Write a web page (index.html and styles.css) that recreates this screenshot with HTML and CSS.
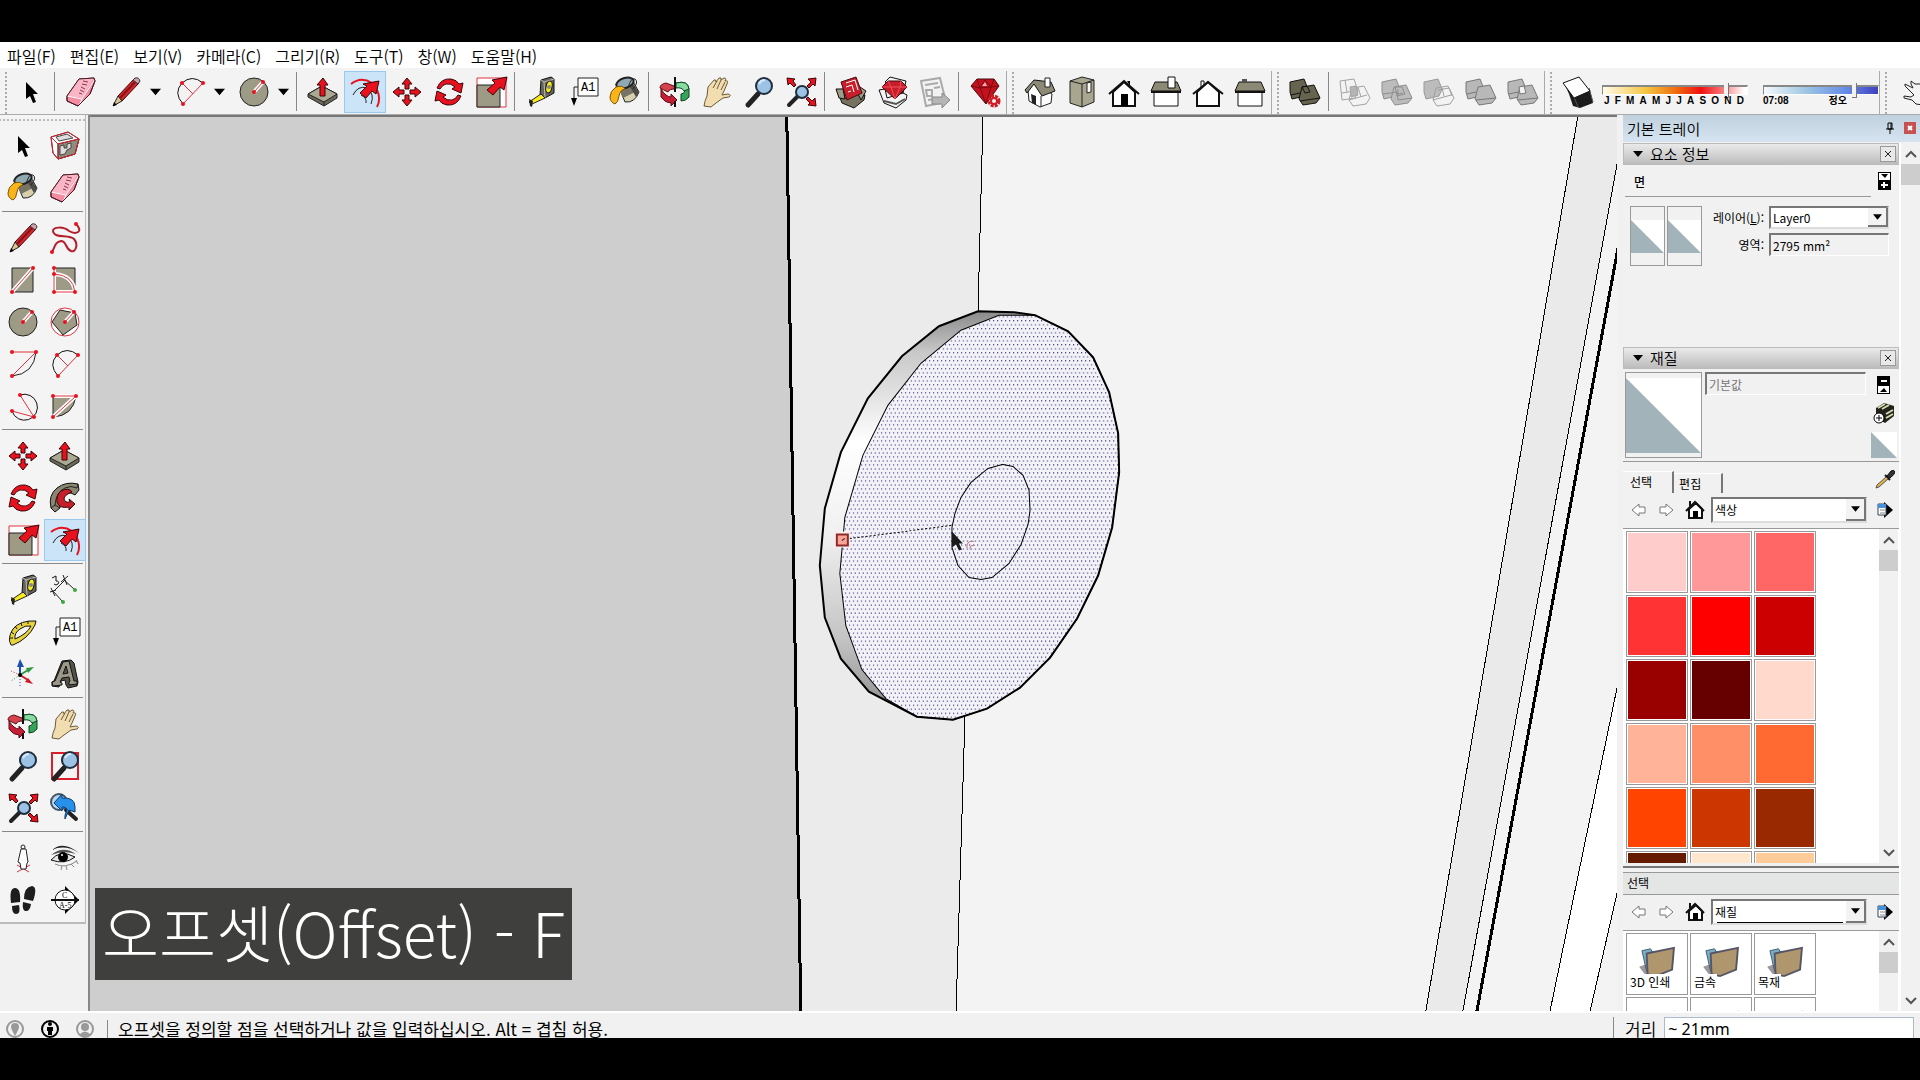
FILE: index.html
```html
<!DOCTYPE html>
<html lang="ko">
<head>
  <meta charset="UTF-8" />
  <meta name="viewport" content="width=device-width, initial-scale=1.0"/>
  <title>SketchUp</title>
  <link rel="stylesheet" href="styles.css">
</head>
<body>

<!-- icon set -->
<svg class="icon-set" aria-hidden="true">
  <symbol id="i-arrow" viewBox="0 0 36 36"><path d="M13 8v17l4-3 3 7 3-1-3-8h5z"/></symbol>
  <symbol id="i-component" viewBox="0 0 36 36">
    <path d="M4 9l17-5 11 7-4 15-17 5-5-6z" fill="#fff" stroke="#222"/>
    <path d="M11 16l21-5-4 15-17 5z" fill="#8f8c7c" stroke="#222"/>
    <path d="M13 18l4-1v3l3 0v-4l4-1v5l-4 2-2 4-5 1zM9 9l11-3 6 4-14 3z" fill="#ddd" stroke="#444"/>
    <path d="M4 9l17-5 11 7-4 15-17 5-5-6zM4 9l7 7 21-5M11 16v15" fill="none" stroke="#e02030"/>
  </symbol>
  <symbol id="i-bucket" viewBox="0 0 36 36">
    <path d="M11 11l7 17q10 1 14-10L25 6z" fill="#d6d0ac" stroke="#222"/>
    <path d="M12 15l10-4 5 3 1 4-12 6z" fill="#777465"/><path d="M24 7l8 11-3 5-7-12z" fill="#4c4b45"/>
    <ellipse cx="18" cy="9" rx="9" ry="5" transform="rotate(-18 18 9)" fill="#8fa9b3" stroke="#222" stroke-width="2"/>
    <path d="M21 14Q24 3 28 5q4 3-2 10" fill="none" stroke="#222"/>
    <path d="M9 13q7-2 9 2-5 1-6 7-1 7-4 8-5-2-5-7 0-6 6-10z" fill="#f9b418" stroke="#7a5410"/>
  </symbol>
  <symbol id="i-eraser" viewBox="0 0 36 36">
    <path d="M16 5l15-1 1 3-5 13-12 12-11-5v-5z" fill="#f48ba2" stroke="#4a1b25"/>
    <path d="M16 5l15-1-12 20-15-2z" fill="#fbb6c6"/>
    <path d="M4 22l15 3 13-20M19 25l-3 7" fill="none" stroke="#fff"/>
    <path d="M16 5L4 22v5l11 5 12-12 5-13-1-3z" fill="none" stroke="#4a1b25"/>
    <path d="M16 19l3 1m-2-4l4 2m-3-5l4 2m-3-5l5 1m-4-4l5 1" stroke="#8a3550"/>
  </symbol>
  <symbol id="i-pencil" viewBox="0 0 36 36">
    <path d="M10 22L26 5l5 4-17 18z" fill="#d8232c" stroke="#3b0d0d"/>
    <path d="M12 24L28 7" stroke="#861414" stroke-width="2"/>
    <path d="M10 22l4 5-9 5z" fill="#ddc393" stroke="#222"/><path d="M5 32l1-4 3 3z"/>
    <path d="M25 6l2-2q4-1 5 3l-2 3z" fill="#cfa3a8" stroke="#333"/>
  </symbol>
  <symbol id="i-freehand" viewBox="0 0 36 36">
    <path d="M29 4C37 12 29 15 22 11 16 6 6 7 6 11c1 8 16 3 21 8 5 6 1 14-3 12-6-2-4-10-10-10-6 1-6 6-9 11" fill="none" stroke="#b3202c" stroke-width="2"/>
    <g fill="#e8121f"><circle cx="29" cy="4" r="2"/><circle cx="5" cy="32" r="2"/></g>
  </symbol>
  <symbol id="i-line" viewBox="0 0 36 36">
    <path d="M7 6h21v24H7z" fill="#9d9a86" stroke="#222"/>
    <path d="M7 30L28 6" stroke="#fff" stroke-width="4"/><path d="M7 30L28 6" stroke="#e0323c"/>
    <g fill="#e8121f"><circle cx="7" cy="30" r="2"/><circle cx="28" cy="6" r="2"/></g>
  </symbol>
  <symbol id="i-rect" viewBox="0 0 36 36">
    <path d="M7 6h21v24H7z" fill="#9d9a86" stroke="#222"/>
    <path d="M7 6v24h21M7 12q19 1 21 18" fill="none" stroke="#fff" stroke-width="4"/>
    <path d="M7 6v24h21M7 12q19 1 21 18" fill="none" stroke="#e0323c"/>
    <g fill="#e8121f"><circle cx="7" cy="6" r="2"/><circle cx="7" cy="12" r="2"/><circle cx="7" cy="30" r="2"/><circle cx="28" cy="30" r="2"/></g>
  </symbol>
  <symbol id="i-circle" viewBox="0 0 36 36">
    <circle cx="18" cy="18" r="14" fill="#9d9a86" stroke="#222"/>
    <path d="M18 18l9-10" stroke="#fff" stroke-width="4"/><path d="M18 18l9-10" stroke="#e0323c"/>
    <g fill="#e8121f"><circle cx="18" cy="18" r="2"/><circle cx="27" cy="8" r="2"/></g>
  </symbol>
  <symbol id="i-polygon" viewBox="0 0 36 36">
    <circle cx="18" cy="18" r="14" fill="#fff" stroke="#e0323c"/>
    <path d="M13 6l15 3 2 12-14 10L5 18z" fill="#9d9a86" stroke="#222"/>
    <path d="M18 18l9-10" stroke="#fff" stroke-width="4"/><path d="M18 18l9-10" stroke="#e0323c"/>
    <g fill="#e8121f"><circle cx="18" cy="18" r="2"/><circle cx="27" cy="8" r="2"/></g>
  </symbol>
  <symbol id="i-arc" viewBox="0 0 36 36">
    <path d="M31 6q-2 22-24 24" fill="none" stroke="#222"/>
    <path d="M7 6h24L7 30" fill="none" stroke="#e0323c"/>
    <g fill="#e8121f"><circle cx="7" cy="6" r="2"/><circle cx="31" cy="6" r="2"/><circle cx="7" cy="30" r="2"/></g>
  </symbol>
  <symbol id="i-arc2" viewBox="0 0 36 36">
    <path d="M11 30Q1 19 10 9 20 0 31 9" fill="none" stroke="#111"/>
    <path d="M31 9L11 30M10 9l11 11" fill="none" stroke="#e0323c"/>
    <g fill="#e8121f"><circle cx="10" cy="9" r="2"/><circle cx="31" cy="9" r="2"/><circle cx="11" cy="30" r="2"/></g>
  </symbol>
  <symbol id="i-arc3" viewBox="0 0 36 36">
    <path d="M15 7a13 13 0 1 1-8 16" fill="none" stroke="#111"/>
    <path d="M15 7l14 22L7 23" fill="none" stroke="#e0323c"/>
    <g fill="#e8121f"><circle cx="15" cy="7" r="2"/><circle cx="7" cy="23" r="2"/><circle cx="29" cy="29" r="2"/></g>
  </symbol>
  <symbol id="i-pie" viewBox="0 0 36 36">
    <path d="M6 8v21Q26 28 29 8z" fill="#9d9a86" stroke="#222"/>
    <path d="M6 8h23L6 29" fill="none" stroke="#fff" stroke-width="4"/><path d="M6 8h23L6 29" fill="none" stroke="#e0323c"/>
    <g fill="#e8121f"><circle cx="6" cy="8" r="2"/><circle cx="29" cy="8" r="2"/><circle cx="6" cy="29" r="2"/></g>
  </symbol>
  <symbol id="i-move" viewBox="0 0 36 36">
    <g id="m-arm"><path d="M18 4l5 6h-3v5h-4v-5h-3z" fill="#e8121f" stroke="#3a0508"/></g>
    <use href="#m-arm" transform="rotate(90 18 18)"/><use href="#m-arm" transform="rotate(180 18 18)"/><use href="#m-arm" transform="rotate(270 18 18)"/>
  </symbol>
  <symbol id="i-push" viewBox="0 0 36 36">
    <path d="M3 20l14-8 15 8v4L19 32 3 23z" fill="#6b6958" stroke="#222"/>
    <path d="M3 20l14-8 15 8-13 8z" fill="#aba994" stroke="#222"/><path d="M19 28v4" stroke="#222"/>
    <path d="M18 4l5 7h-3v11h-5V11h-3z" fill="#e8121f" stroke="#3a0508"/>
  </symbol>
  <symbol id="i-rotate" viewBox="0 0 36 36">
    <path id="r-half" d="M6 14q4-10 14-9 6 1 8 5l4-1-2 10-9-4 3-2q-4-4-9-3-4 1-6 5z" fill="#e8121f" stroke="#3a0508"/>
    <use href="#r-half" transform="rotate(180 18 18)"/>
  </symbol>
  <symbol id="i-follow" viewBox="0 0 36 36">
    <path d="M4 28Q1 15 10 8q9-7 21-4l1 6-4 5-4-2q-8 0-11 6-1 4 0 9l-5 4z" fill="#8a8672" stroke="#111"/>
    <path d="M4 28l4-3q1-13 10-17 6-3 12 0l1-4M8 25l5 3" fill="none" stroke="#222"/>
    <path d="M14 11q8-4 11 1-8 3-8 7 1 4 6 3l-1-3 6 5-6 6 0-3q-10 2-12-5-1-7 4-11z" fill="#c51f2a" stroke="#3a0508"/>
  </symbol>
  <symbol id="i-scale" viewBox="0 0 36 36">
    <path d="M4 4h29v29H4z" fill="#fff" stroke="#e0323c"/><path d="M4 11h23v22H4z" fill="#9d9a86" stroke="#222"/>
    <path d="M34 3l-3 13-4-3-7 8-6-5 8-7-3-3z" fill="#e8121f" stroke="#3a0508"/>
  </symbol>
  <symbol id="i-offset" viewBox="0 0 36 36">
    <path d="M4 10Q14 2 25 9q11 12 5 24" fill="none" stroke="#e8121f" stroke-width="2"/>
    <path d="M6 21q5-10 14-7 8 6 4 16M14 21q6 3 5 8" fill="none" stroke="#222"/>
    <path d="M32 7l-3 13-4-3-6 7-6-5 7-7-4-2z" fill="#e8121f" stroke="#3a0508"/>
  </symbol>
  <symbol id="i-tape" viewBox="0 0 36 36">
    <path d="M18 6l10-3 3 2v14l-9 5-5-3z" fill="#66645c" stroke="#111"/><path d="M18 6l3 2 10-3M21 8l1 16" fill="none" stroke="#bbb"/>
    <ellipse cx="26" cy="13" rx="3" ry="6" transform="rotate(12 26 13)" fill="#f6ea20" stroke="#111"/><circle cx="26" cy="13" r="2" fill="#888"/>
    <path d="M18 20l4 4-13 6-3-2z" fill="#f6ea20" stroke="#222"/><path d="M6 25l4 2-1 6-2-1z" fill="#222"/>
  </symbol>
  <symbol id="i-dim" viewBox="0 0 36 36">
    <path d="M18 8L6 20m10-13l11 10M6 19l9 10M14 10l7-6m-5-1l4 10M3 20l6-2M4 16l4 8" stroke="#222" fill="none"/>
    <path d="M5 6l4-2v5q4 0 2 3-2 2-4 0" fill="none" stroke="#111"/>
    <g fill="#39a845"><circle cx="28" cy="18" r="2"/><circle cx="16" cy="30" r="2"/></g>
  </symbol>
  <symbol id="i-protractor" viewBox="0 0 36 36">
    <path d="M6 31Q2 24 8 15 15 6 31 7l-1 4q-7 14-22 20z" fill="#e8d33c" stroke="#111"/>
    <path d="M10 25q-1-6 5-10 5-4 11-3-4 8-16 13z" fill="#f3f3f3" stroke="#111"/>
    <path d="M5 24l3 0m-2-6l3 2m1-8l2 3m4-6l1 3m6-5v3" stroke="#111"/>
  </symbol>
  <symbol id="i-axes" viewBox="0 0 36 36">
    <path d="M15 19V9" stroke="#1c4fae" stroke-width="2"/><path d="M12 11l3-8 4 8z" fill="#1c4fae"/><path d="M15 20v11" stroke="#1c4fae" stroke-dasharray="1 2"/>
    <path d="M15 19l8-5" stroke="#2c9a3c" stroke-width="2"/><path d="M21 12l8-1-6 6z" fill="#2c9a3c"/><path d="M15 19l-9 6" stroke="#2c9a3c" stroke-dasharray="1 2"/>
    <path d="M15 19l8 5" stroke="#d11c26" stroke-width="2"/><path d="M23 22l5 6-8-2z" fill="#d11c26"/><path d="M15 19l-9-4" stroke="#d11c26" stroke-dasharray="1 2"/>
    <circle cx="15" cy="19" r="2"/>
  </symbol>
  <symbol id="i-text3d" viewBox="0 0 36 36">
    <path d="M5 26l2-1 8-20 9-1 3 3 4 19-1 4-9 2-2-3-1-5-4 1-1 3-1 3-7-1z" fill="#55524a" stroke="#111"/>
    <path d="M5 26l3-1 8-19 6-1 5 20 3 0v3l-8 1v-3l1-1-1-4-7 1-2 4 2 1v2l-9 1zM16 18l5-1-2-7z" fill="#9b9888" stroke="#111" fill-rule="evenodd"/>
  </symbol>
  <symbol id="i-orbit" viewBox="0 0 36 36">
    <path d="M17 12L9 9q-6 1-6 5l8 4q1-3 7-3z" fill="#d5424c" stroke="#5a0e14"/>
    <path d="M4 15v8q4 6 10 6v3l6-6-6-6v3q-5 0-10-8z" fill="#c51f38" stroke="#5a0e14"/>
    <path d="M19 9q12-3 13 6v8q-3 4-8 4v-7q5-1 3-5-3-3-8-2z" fill="#36a35a" stroke="#0d4420"/><path d="M19 9q12-3 13 6l-5 2q-2-4-8-3z" fill="#86dca0" stroke="#0d4420"/>
    <path d="M18 3v15m0 9v6" stroke="#111" stroke-width="2"/>
  </symbol>
  <symbol id="i-hand" viewBox="0 0 36 36">
    <path d="M5 32q1-6 3-10l1-9 6-7q2-1 2 2l3-4q3-1 2 2l3-2q3 0 1 3 4-1 2 3l-3 7-2 4 6-1q4 1 1 3l-6 1-7 5-5 4z" fill="#f2ddb0" stroke="#6b5a3a"/>
    <path d="M14 14l4-7m0 8l4-9m0 10l4-8" stroke="#6b5a3a"/>
  </symbol>
  <symbol id="i-zoom" viewBox="0 0 36 36">
    <path d="M17 20L7 31" stroke="#222" stroke-width="5" stroke-linecap="round"/>
    <circle cx="23" cy="12" r="8" fill="#9cc3e6" stroke="#1f2f3d" stroke-width="2"/><path d="M18 10q2-4 6-4" fill="none" stroke="#dbeafa" stroke-width="2"/>
  </symbol>
  <symbol id="i-zoomwin" viewBox="0 0 36 36">
    <path d="M5 5h26v26H5z" fill="none" stroke="#d8202c" stroke-width="2"/><use href="#i-zoom"/>
  </symbol>
  <symbol id="i-zoomext" viewBox="0 0 36 36">
    <path d="M15 22L6 31" stroke="#222" stroke-width="4" stroke-linecap="round"/>
    <circle cx="19" cy="18" r="6" fill="#9cc3e6" stroke="#1f2f3d" stroke-width="2"/>
    <g fill="#e8121f" stroke="#3a0508"><path d="M4 4l8 1-2 2 3 4-2 2-4-4-2 2z"/><path d="M33 4l-1 8-2-2-4 4-2-2 4-4-3-3z"/><path d="M33 32l-8-1 2-2-4-4 2-2 4 4 3-3z"/></g>
  </symbol>
  <symbol id="i-prev" viewBox="0 0 36 36">
    <circle cx="12" cy="12" r="8" fill="#b8d6ee" stroke="#456" stroke-width="2"/><path d="M19 20l10 9" stroke="#222" stroke-width="4" stroke-linecap="round"/>
    <path d="M7 13l8-9v4q13-1 13 9v5l-6-2-4 9q-1-3 2-9 0-3-5-3v4z" fill="#2790ea" stroke="#0f3c6b"/>
  </symbol>
  <symbol id="i-person" viewBox="0 0 36 36">
    <path d="M12 25l12 7m-12 0l13-7" stroke="#e0323c"/>
    <circle cx="18" cy="7" r="2" fill="#fff" stroke="#222"/><path d="M16 9h5l2 13-1 1-1 6h-5l-1-6-2-1z" fill="#fff" stroke="#222"/>
  </symbol>
  <symbol id="i-eye" viewBox="0 0 36 36">
    <path d="M5 10Q16 0 32 13 18 4 5 10z" fill="#222"/>
    <path d="M4 15Q16 5 29 14q-12-4-25 1z" fill="#555"/>
    <path d="M4 20q9-11 24-3-10 8-24 3z" fill="#e4e4e4" stroke="#111"/><circle cx="16" cy="17" r="5"/><circle cx="15" cy="15" r="1" fill="#fff"/>
    <path d="M8 24q10 5 22-3M15 26l-1 4m5-4l1 4m4-6l3 3M29 20l2 4" fill="none" stroke="#888"/>
  </symbol>
  <symbol id="i-feet" viewBox="0 0 36 36">
    <path d="M6 21Q4 6 10 6t5 14zM7 24l7-1q2 9-3 9-4 0-4-8zM19 17q0-12 8-13 6 1 1 15zM18 20l8 2q-1 8-6 7-3-1-2-9z" fill="#1d1d1d"/>
  </symbol>
  <symbol id="i-warehouse" viewBox="0 0 36 36">
    <path d="M4 16l6-1 2 9 16-5 4 2-1 5-10 8-12-5z" fill="#77725f" stroke="#111"/><path d="M3 15l7 0 2 10-6-1zM27 13l6 4-5 9-3-6z" fill="#9d9a86" stroke="#111"/>
    <path d="M8 8l15-5 6 16-15 7z" fill="#c81e2b" stroke="#4a0910"/><path d="M13 9l9-3 3 10M13 13l6-2 2 7M15 18l3-1" fill="none" stroke="#fff"/>
  </symbol>
  <symbol id="i-extwh" viewBox="0 0 36 36">
    <path d="M4 16l6-1 2 9 16-5 4 2-1 5-10 8-12-5zM10 8l5-5 16 4-3 12z" fill="#f4f4f4" stroke="#111"/>
    <path d="M7 13l6-6h13l6 6-12 12z" fill="#c81e2b" stroke="#4a0910"/><path d="M7 13h25M13 7l3 6 4 12 5-12 1-6" fill="none" stroke="#f0505a"/>
    <path d="M9 27l12 3 9-5" fill="none" stroke="#555" stroke-width="2"/>
  </symbol>
  <symbol id="i-layout" viewBox="0 0 36 36">
    <path d="M4 7l19-3 6 24-20 4z" fill="#f2f2f2" stroke="#aaa" stroke-width="2"/><path d="M8 11l13-2M9 16h6v6h-5zM17 14l6-1M11 26l7-1" fill="none" stroke="#aaa" stroke-width="2"/>
    <path d="M15 23h10v-4l8 7-8 8v-4H15z" fill="#b5b5b5" stroke="#888"/>
  </symbol>
  <symbol id="i-gem" viewBox="0 0 36 36">
    <path d="M4 12l6-7h17l5 7-13 18z" fill="#c3121d" stroke="#4a0910"/><path d="M4 12l9 2 11-1 8-1M10 5l3 9 6 16 5-17 3-8M13 14l5-8 6 7" fill="none" stroke="#7d0912"/><path d="M15 12l3-4 2 4z" fill="#ffb0b4"/>
    <circle cx="27" cy="27" r="5" fill="none" stroke="#d11c26" stroke-width="3" stroke-dasharray="3 1"/><circle cx="27" cy="27" r="3" fill="#f3f3f3" stroke="#d11c26" stroke-width="2"/>
  </symbol>
  <symbol id="i-iso" viewBox="0 0 36 36">
    <path d="M6 16l6-8 18 12-1 9-11 4-11-6z" fill="#fff" stroke="#222"/><path d="M3 16L12 6l17 2 4 9-13 5-8-12-7 9z" fill="#8c8975" stroke="#111"/><path d="M9 20l5 2v9l-4-2z" fill="#222"/><path d="M23 4h5v9h-5z" fill="#fff" stroke="#222"/><path d="M19 22v11" stroke="#222"/>
  </symbol>
  <symbol id="i-top" viewBox="0 0 36 36">
    <path d="M6 7l12-4 12 3v22l-12 5-12-4z" fill="#a9a68f" stroke="#222"/><path d="M18 10v23M6 7l12 3 12-4" fill="none" stroke="#222"/><path d="M23 9l4-1v10l-4 1z" fill="#fff" stroke="#222"/>
  </symbol>
  <symbol id="i-front" viewBox="0 0 36 36">
    <path d="M7 18v14h22V18L18 8z" fill="#fff" stroke="#111" stroke-width="2"/><path d="M3 20L18 7l15 13" fill="none" stroke="#111" stroke-width="2"/><path d="M15 20h7v12h-7zM21 7h3v5z"/>
  </symbol>
  <symbol id="i-right" viewBox="0 0 36 36">
    <path d="M6 17h24v15H6z" fill="#fff" stroke="#111"/><path d="M7 8h22l4 9H3z" fill="#8c8975" stroke="#111"/><path d="M3 18h30" stroke="#111" stroke-width="2"/><path d="M20 3h7v11h-7z" fill="#fff" stroke="#111"/>
  </symbol>
  <symbol id="i-back" viewBox="0 0 36 36">
    <path d="M11 14V7h3v5" fill="#fff" stroke="#111"/><path d="M7 18v14h22V18L18 8z" fill="#fff" stroke="#111" stroke-width="2"/><path d="M3 20L18 8l15 12" fill="none" stroke="#111" stroke-width="2"/>
  </symbol>
  <symbol id="i-left" viewBox="0 0 36 36">
    <path d="M6 17h24v15H6z" fill="#fff" stroke="#111"/><path d="M7 8h22l4 9H3z" fill="#8c8975" stroke="#111"/><path d="M3 18h30" stroke="#111" stroke-width="2"/><path d="M10 5h5v3h-5z" fill="#555"/>
  </symbol>
  <symbol id="i-shell" viewBox="0 0 36 36">
    <g fill="#66644f" stroke="#111"><path d="M3 8l14-3 4 10-3 7-13 3-2-7z"/><path d="M15 13l12-2 6 13-4 5-13 2-4-6z"/><path d="M4 21l9-2m0 8l20-3M15 13l3 6 5-1-3-6z" fill="none"/></g>
  </symbol>
  <symbol id="i-solid1" viewBox="0 0 36 36">
    <g fill="none" stroke="#a4a4a4"><path d="M3 7l14-2 4 12-3 7-13 2zM15 14l12-2 6 12-4 6-13 2-4-6zM5 19l13-2M12 26l18-5M8 6l2 12M21 13l3 10"/><path d="M13 13l6-1 2 9-7 2z" fill="#b5b5b5"/></g>
  </symbol>
  <symbol id="i-solid2" viewBox="0 0 36 36">
    <g fill="#bcbcbc" stroke="#8e8e8e"><path d="M3 8l14-3 4 10-3 7-13 3-2-7z"/><path d="M15 13l12-2 6 13-4 5-13 2-4-6z"/><path d="M4 20l14-2 1 8 14-2M16 13h7l3 7-8 2zM19 15v5l5-1" fill="none"/></g>
  </symbol>
  <symbol id="i-solid3" viewBox="0 0 36 36">
    <path d="M3 8l14-3 4 10-3 7-13 3-2-7z" fill="#bcbcbc" stroke="#999"/>
    <g fill="none" stroke="#a0a0a0"><path d="M15 14l12-2 6 12-4 6-13 2-4-6zM12 26l18-5M21 14l2 8M17 16l11-2 3 8"/></g>
  </symbol>
  <symbol id="i-solid4" viewBox="0 0 36 36">
    <g fill="#b8b8b8" stroke="#777"><path d="M3 8l14-3 4 10-3 7-13 3-2-7z"/><path d="M15 13l12-2 6 13-4 5-13 2-4-6z"/><path d="M4 20l9-2m0 8l20-2" fill="none"/></g>
  </symbol>
  <symbol id="i-solid5" viewBox="0 0 36 36">
    <g fill="#b8b8b8" stroke="#777"><path d="M3 8l14-3 4 10-3 7-13 3-2-7z"/><path d="M15 13l12-2 6 13-4 5-13 2-4-6z"/><path d="M4 20l9-2m0 8l20-2" fill="none"/><path d="M14 13l5-1 2 7-6 1z" fill="#f4f4f4"/></g>
  </symbol>
  <symbol id="i-shadow" viewBox="0 0 36 36">
    <path d="M4 9l5 11 4 12 7 2 13-5-3-13z" fill="#1c1c1c"/><path d="M14 23l4 10M29 14l4 14" stroke="#555"/><path d="M3 9l16-6 11 14-16 7z" fill="#fff" stroke="#111"/>
  </symbol>
  <symbol id="i-sketch" viewBox="0 0 36 36">
    <path d="M26 10h-6l-4-3v3l2 4-8-4v2l5 5 4 4-3 2-7-1v2l8 2 4 4 7 1" fill="none" stroke="#222"/>
  </symbol>
  <symbol id="i-back-nav" viewBox="0 0 16 16"><path d="M1 8l7-6v3h6v6H8v3z" fill="#fff" stroke="#777"/></symbol>
  <symbol id="i-fwd-nav" viewBox="0 0 16 16"><path d="M15 8L8 2v3H2v6h6v3z" fill="#fff" stroke="#777"/></symbol>
  <symbol id="i-home" viewBox="0 0 20 20"><path d="M4 9v9h13V9l-6-6z" fill="#fff" stroke="#111" stroke-width="2"/><path d="M1 11l9-9 9 9M5 6V1" fill="none" stroke="#111" stroke-width="2"/><path d="M8 11h5v7H8z"/></symbol>
  <symbol id="i-detail" viewBox="0 0 16 18"><path d="M7 1l9 8-9 8z"/><path d="M1 3h8v11H1z" fill="#fff" stroke="#345"/><path d="M1 3h8v4H1z" fill="#4a90d9"/><path d="M3 9h5m-5 3h5" stroke="#888"/></symbol>
  <symbol id="i-folder" viewBox="0 0 40 34">
    <path d="M1 22l6 8h12L7 20z" fill="#999"/><path d="M4 5l9-2 2 3 12 2-15 21-3-2z" fill="#79aecb" stroke="#456"/>
    <path d="M9 8l29-6-2 23-17 7-9-2z" fill="#b0966c" stroke="#556" stroke-width="2"/>
  </symbol>
  <symbol id="i-chev-up" viewBox="0 0 12 8"><path d="M1 7l5-5 5 5" fill="none" stroke="#555" stroke-width="2"/></symbol>
  <symbol id="i-chev-down" viewBox="0 0 12 8"><path d="M1 1l5 5 5-5" fill="none" stroke="#555" stroke-width="2"/></symbol>
  <symbol id="i-drop" viewBox="0 0 10 6"><path d="M0 0h10L5 6z"/></symbol>
  <symbol id="i-half" viewBox="0 0 32 32" preserveAspectRatio="none"><path d="M0 0h32v32H0z" fill="#fff"/><path d="M0 0l32 32H0z" fill="#a3b3ba"/></symbol>
</svg>

<div class="app">
  <nav class="menu">
    <a href="#">파일(F)</a>
    <a href="#">편집(E)</a>
    <a href="#">보기(V)</a>
    <a href="#">카메라(C)</a>
    <a href="#">그리기(R)</a>
    <a href="#">도구(T)</a>
    <a href="#">창(W)</a>
    <a href="#">도움말(H)</a>
  </nav>

  <div class="toolbar">
    <div class="group first">
      <button class="tool" aria-label="선택"><svg><use href="#i-arrow"/></svg></button>
      <span class="sep"></span>
      <button class="tool" aria-label="지우개"><svg><use href="#i-eraser"/></svg></button>
      <button class="tool split" aria-label="선"><svg><use href="#i-pencil"/></svg></button>
      <button class="more" aria-label="선 도구"><svg><use href="#i-drop"/></svg></button>
      <button class="tool split" aria-label="호"><svg><use href="#i-arc2"/></svg></button>
      <button class="more" aria-label="호 도구"><svg><use href="#i-drop"/></svg></button>
      <button class="tool split" aria-label="원"><svg><use href="#i-circle"/></svg></button>
      <button class="more" aria-label="도형 도구"><svg><use href="#i-drop"/></svg></button>
      <span class="sep"></span>
      <button class="tool" aria-label="밀기/끌기"><svg><use href="#i-push"/></svg></button>
      <button class="tool active" aria-label="오프셋"><svg><use href="#i-offset"/></svg></button>
      <button class="tool" aria-label="이동"><svg><use href="#i-move"/></svg></button>
      <button class="tool" aria-label="회전"><svg><use href="#i-rotate"/></svg></button>
      <button class="tool" aria-label="배율"><svg><use href="#i-scale"/></svg></button>
      <span class="sep"></span>
      <button class="tool" aria-label="줄자"><svg><use href="#i-tape"/></svg></button>
      <button class="tool" aria-label="텍스트"><svg viewBox="0 0 36 36"><path d="M13 4h20v18H13z" fill="#fff" stroke="#222"/><path d="M13 13H9v13" fill="none" stroke="#222"/><path d="M6 24h6l-3 8z"/><text x="16" y="17" class="glyph">A1</text></svg></button>
      <button class="tool" aria-label="페인트통"><svg><use href="#i-bucket"/></svg></button>
      <span class="sep"></span>
      <button class="tool" aria-label="궤도"><svg><use href="#i-orbit"/></svg></button>
      <button class="tool" aria-label="팬"><svg><use href="#i-hand"/></svg></button>
      <button class="tool" aria-label="확대"><svg><use href="#i-zoom"/></svg></button>
      <button class="tool" aria-label="범위 확대"><svg><use href="#i-zoomext"/></svg></button>
      <span class="sep"></span>
      <button class="tool" aria-label="3D Warehouse"><svg><use href="#i-warehouse"/></svg></button>
      <button class="tool" aria-label="Extension Warehouse"><svg><use href="#i-extwh"/></svg></button>
      <button class="tool" aria-label="LayOut"><svg><use href="#i-layout"/></svg></button>
      <span class="sep"></span>
      <button class="tool" aria-label="확장 관리자"><svg><use href="#i-gem"/></svg></button>
    </div>
    <div class="group">
      <button class="tool" aria-label="등각"><svg><use href="#i-iso"/></svg></button>
      <button class="tool" aria-label="위"><svg><use href="#i-top"/></svg></button>
      <button class="tool" aria-label="앞"><svg><use href="#i-front"/></svg></button>
      <button class="tool" aria-label="오른쪽"><svg><use href="#i-right"/></svg></button>
      <button class="tool" aria-label="뒤"><svg><use href="#i-back"/></svg></button>
      <button class="tool" aria-label="왼쪽"><svg><use href="#i-left"/></svg></button>
    </div>
    <div class="group">
      <button class="tool" aria-label="외부 셸"><svg><use href="#i-shell"/></svg></button>
      <span class="sep"></span>
      <button class="tool" aria-label="교차"><svg><use href="#i-solid1"/></svg></button>
      <button class="tool" aria-label="결합"><svg><use href="#i-solid2"/></svg></button>
      <button class="tool" aria-label="빼기"><svg><use href="#i-solid3"/></svg></button>
      <button class="tool" aria-label="자르기"><svg><use href="#i-solid4"/></svg></button>
      <button class="tool" aria-label="분할"><svg><use href="#i-solid5"/></svg></button>
    </div>
    <div class="group">
      <button class="tool" aria-label="그림자"><svg><use href="#i-shadow"/></svg></button>
      <div class="slider date">
        <input type="range" min="0" max="100" value="87" aria-label="날짜">
        <div class="ticks"><span>J</span><span>F</span><span>M</span><span>A</span><span>M</span><span>J</span><span>J</span><span>A</span><span>S</span><span>O</span><span>N</span><span>D</span></div>
      </div>
      <div class="slider time">
        <input type="range" min="0" max="100" value="81" aria-label="시간">
        <div class="ticks"><span>07:08</span><span class="noon">정오</span></div>
      </div>
    </div>
    <div class="group">
      <button class="tool" aria-label="샌드박스"><svg><use href="#i-sketch"/></svg></button>
    </div>
  </div>

  <div class="work">
    <aside class="dock">
      <div class="palette">
        <div class="cells">
          <button class="tool" aria-label="선택"><svg><use href="#i-arrow"/></svg></button>
          <button class="tool" aria-label="구성요소"><svg><use href="#i-component"/></svg></button>
          <button class="tool" aria-label="페인트통"><svg><use href="#i-bucket"/></svg></button>
          <button class="tool" aria-label="지우개"><svg><use href="#i-eraser"/></svg></button>
        </div>
        <div class="cells">
          <button class="tool" aria-label="선"><svg><use href="#i-pencil"/></svg></button>
          <button class="tool" aria-label="자유곡선"><svg><use href="#i-freehand"/></svg></button>
          <button class="tool" aria-label="직사각형"><svg><use href="#i-line"/></svg></button>
          <button class="tool" aria-label="회전 직사각형"><svg><use href="#i-rect"/></svg></button>
          <button class="tool" aria-label="원"><svg><use href="#i-circle"/></svg></button>
          <button class="tool" aria-label="다각형"><svg><use href="#i-polygon"/></svg></button>
          <button class="tool" aria-label="호"><svg><use href="#i-arc"/></svg></button>
          <button class="tool" aria-label="2점호"><svg><use href="#i-arc2"/></svg></button>
          <button class="tool" aria-label="3점호"><svg><use href="#i-arc3"/></svg></button>
          <button class="tool" aria-label="파이"><svg><use href="#i-pie"/></svg></button>
        </div>
        <div class="cells">
          <button class="tool" aria-label="이동"><svg><use href="#i-move"/></svg></button>
          <button class="tool" aria-label="밀기/끌기"><svg><use href="#i-push"/></svg></button>
          <button class="tool" aria-label="회전"><svg><use href="#i-rotate"/></svg></button>
          <button class="tool" aria-label="따라가기"><svg><use href="#i-follow"/></svg></button>
          <button class="tool" aria-label="배율"><svg><use href="#i-scale"/></svg></button>
          <button class="tool active" aria-label="오프셋"><svg><use href="#i-offset"/></svg></button>
        </div>
        <div class="cells">
          <button class="tool" aria-label="줄자"><svg><use href="#i-tape"/></svg></button>
          <button class="tool" aria-label="치수"><svg><use href="#i-dim"/></svg></button>
          <button class="tool" aria-label="각도기"><svg><use href="#i-protractor"/></svg></button>
          <button class="tool" aria-label="텍스트"><svg viewBox="0 0 36 36"><path d="M13 4h20v18H13z" fill="#fff" stroke="#222"/><path d="M13 13H9v13" fill="none" stroke="#222"/><path d="M6 24h6l-3 8z"/><text x="16" y="17" class="glyph">A1</text></svg></button>
          <button class="tool" aria-label="축"><svg><use href="#i-axes"/></svg></button>
          <button class="tool" aria-label="3D 텍스트"><svg><use href="#i-text3d"/></svg></button>
        </div>
        <div class="cells">
          <button class="tool" aria-label="궤도"><svg><use href="#i-orbit"/></svg></button>
          <button class="tool" aria-label="팬"><svg><use href="#i-hand"/></svg></button>
          <button class="tool" aria-label="확대"><svg><use href="#i-zoom"/></svg></button>
          <button class="tool" aria-label="창 확대"><svg><use href="#i-zoomwin"/></svg></button>
          <button class="tool" aria-label="범위 확대"><svg><use href="#i-zoomext"/></svg></button>
          <button class="tool" aria-label="이전"><svg><use href="#i-prev"/></svg></button>
        </div>
        <div class="cells">
          <button class="tool" aria-label="카메라 배치"><svg><use href="#i-person"/></svg></button>
          <button class="tool" aria-label="둘러보기"><svg><use href="#i-eye"/></svg></button>
          <button class="tool" aria-label="걷기"><svg><use href="#i-feet"/></svg></button>
          <button class="tool" aria-label="단면"><svg viewBox="0 0 36 36"><path d="M18 4l14 14-14 14z"/><circle cx="18" cy="18" r="10" fill="#fff" stroke="#111"/><path d="M4 18h28" stroke="#111" stroke-width="2"/><text x="15" y="16" class="tiny">C</text><text x="12" y="26" class="tiny">A-5</text></svg></button>
        </div>
      </div>
    </aside>

    <main class="viewport">
      <svg class="scene" viewBox="90 117 1527 893" preserveAspectRatio="xMinYMin slice">
        <defs>
          <pattern id="dots" width="4" height="8" patternUnits="userSpaceOnUse">
            <path d="M0 0h4v8H0z" fill="#f2f2f8"/><path d="M0 0h1v1H0zM2 4h1v1H2z" fill="#14145c"/>
          </pattern>
          <linearGradient id="rim" x1="0" y1="0" x2="0" y2="1">
            <stop offset="0" stop-color="#8a8a8a"/><stop offset=".1" stop-color="#c8c8c8"/><stop offset=".32" stop-color="#fff"/>
            <stop offset=".55" stop-color="#f0f0f0"/><stop offset=".8" stop-color="#c4c4c4"/><stop offset="1" stop-color="#888"/>
          </linearGradient>
        </defs>
        <path d="M90 117h1527v895H90z" fill="#f3f3f3"/>
        <path d="M90 117h696l14 895H90z" fill="#cecece"/>
        <path d="M786 117h196l-5 194-13 405-9 296H800z" fill="#ebebeb"/>
        <path d="M1576 117h41v38l-156 857h-37z" fill="#eaeaea"/>
        <path d="M1617 679v206l-29 127h-40z" fill="#fff"/>
        <g fill="none" stroke="#000" shape-rendering="crispEdges">
          <path d="M982 117l-5 194M964 716l-9 296M1576 117l-152 895M1617 155l-156 857M1617 679l-69 333M1617 885l-29 127"/>
          <path d="M786 117l14 895M1617 244l-142 768" stroke-width="3"/>
        </g>
        <path d="M977 311l36 1 21 3 33 16 25 26 16 35 9 41 1 39-7 55-14 48-21 43-27 39-30 30-33 21-34 11-36-3-48-25-28-33-16-41-5-52 5-57 16-56 27-54 34-42 37-30z" fill="url(#rim)"/>
        <path d="M998 315h36l33 16 25 26 16 35 9 41 1 39-7 55-14 48-21 43-27 39-30 30-33 21-34 11-36-3-31-18-24-29-16-44-6-52 5-56 18-62 25-50 33-42 40-33z" fill="url(#dots)" stroke="#000"/>
        <path d="M977 311l36 1 21 3 33 16 25 26 16 35 9 41 1 39-7 55-14 48-21 43-27 39-30 30-33 21-34 11-36-3-48-25-28-33-16-41-5-52 5-57 16-56 27-54 34-42 37-30z" fill="none" stroke="#000" stroke-width="2"/>
        <path d="M1002 464l10 2 10 9 6 15 1 20-2 14-7 20-12 19-17 14-11 2-12-2-11-12-6-18v-20l3-14 6-16 10-15 17-14z" fill="none" stroke="#000"/>
        <path d="M841 539l110-14" stroke="#000" stroke-dasharray="2 2"/>
        <path d="M833 531h16v16h-16z" fill="#fbeeee"/><path d="M836 534h11v11h-11z" fill="#fba597" stroke="#8f2b2b" stroke-width="2"/>
        <path d="M841 540l3-2" stroke="#333"/>
        <path d="M951 531v16l4-3 3 6 3-1-3-6h4z" fill="#1a1a1a"/>
        <path d="M966 548q-1-8 7-7m-4 8q0-5 5-4" fill="none" stroke="#c47c88"/>
      </svg>
      <p class="caption">오프셋(Offset) - F</p>
    </main>

    <aside class="tray">
      <header class="tray-title">
        <h1>기본 트레이</h1>
        <button class="pin" aria-label="고정"><svg viewBox="0 0 8 12"><path d="M2 1h4v6H2zM0 7h8M4 7v5M5 1v6" fill="none" stroke="#000"/></svg></button>
        <button class="close-red" aria-label="닫기"><svg viewBox="0 0 12 12"><path d="M4 4l4 4m0-4L4 8" stroke="#fff" stroke-width="2"/></svg></button>
      </header>
      <div class="tray-body">
        <div class="panels">
          <section class="entity">
            <header class="panel-head"><svg><use href="#i-drop"/></svg><h2>요소 정보</h2><button class="close" aria-label="닫기"><svg viewBox="0 0 12 12"><path d="M3 3l6 6m0-6L3 9" stroke="#222"/></svg></button></header>
            <div class="entity-name"><b>면</b><button class="flat" aria-label="세부 정보"><svg width="13" height="18" viewBox="0 0 13 18"><path d="M0 0h13v18H0z"/><path d="M1 1h11v7H1z" fill="#fff"/><path d="M3 2h7L7 6z"/><path d="M6 10v6M3 13h7" stroke="#fff" stroke-width="2"/></svg></button></div>
            <div class="entity-info">
              <span class="thumb"><svg><use href="#i-half"/></svg></span>
              <span class="thumb"><svg><use href="#i-half"/></svg></span>
              <div class="fields">
                <label for="layer">레이어(<u>L</u>):</label>
                <span class="combo"><select id="layer"><option>Layer0</option></select><i><svg><use href="#i-drop"/></svg></i></span>
                <label for="area">영역:</label>
                <input class="sunken" id="area" value="2795 mm²" readonly>
              </div>
            </div>
          </section>

          <section class="materials">
            <header class="panel-head"><svg><use href="#i-drop"/></svg><h2>재질</h2><button class="close" aria-label="닫기"><svg viewBox="0 0 12 12"><path d="M3 3l6 6m0-6L3 9" stroke="#222"/></svg></button></header>
            <div class="current">
              <span class="preview"><svg><use href="#i-half"/></svg></span>
              <input class="sunken mat-name" value="기본값" aria-label="재질 이름" disabled>
              <div class="side">
                <button class="flat" aria-label="보조 창"><svg width="13" height="18" viewBox="0 0 13 18"><path d="M0 0h13v18H0z"/><path d="M1 10h11v7H1z" fill="#fff"/><path d="M3 16h7l-3-4z"/><path d="M4 5h6" stroke="#fff" stroke-width="2"/></svg></button>
                <button class="flat" aria-label="재질 만들기"><svg width="22" height="22" viewBox="0 0 22 22"><path d="M3 6l8-5 10 3v10l-9 7-9-5z" fill="#22221a"/><path d="M5 6l7-4M9 7l7-4M13 12l7-4m-7 8l7-4" fill="none" stroke="#d5dbb0" stroke-width="2"/><circle cx="6" cy="16" r="5" fill="#fff" stroke="#000"/><path d="M6 13v6M3 16h6" stroke="#000"/></svg></button>
                <button class="flat" aria-label="기본 재질"><svg class="mini"><use href="#i-half"/></svg></button>
              </div>
            </div>
            <div class="tabs">
              <button class="tab on">선택</button><button class="tab">편집</button>
              <button class="flat dropper" aria-label="샘플"><svg width="20" height="20" viewBox="0 0 20 20"><path d="M12 7l4-5q3-2 4 1 0 2-5 6z" fill="#333" stroke="#111"/><path d="M10 6l5 5" stroke="#111" stroke-width="2"/><path d="M11 8l2 2-9 8-3 1 1-3z" fill="#e0b24c" stroke="#555"/></svg></button>
            </div>
            <div class="browse">
              <button class="flat" aria-label="뒤로"><svg width="16" height="16"><use href="#i-back-nav"/></svg></button>
              <button class="flat" aria-label="앞으로"><svg width="16" height="16"><use href="#i-fwd-nav"/></svg></button>
              <button class="flat" aria-label="모델"><svg width="20" height="20"><use href="#i-home"/></svg></button>
              <span class="combo tall"><select aria-label="모음"><option>색상</option></select><i><svg><use href="#i-drop"/></svg></i></span>
              <button class="flat" aria-label="세부"><svg width="16" height="18"><use href="#i-detail"/></svg></button>
            </div>
            <div class="list colors">
              <div class="grid">
                <button class="swatch c1" aria-label="A01"></button><button class="swatch c2" aria-label="A02"></button><button class="swatch c3" aria-label="A03"></button>
                <button class="swatch c4" aria-label="A04"></button><button class="swatch c5" aria-label="A05"></button><button class="swatch c6" aria-label="A06"></button>
                <button class="swatch c7" aria-label="A07"></button><button class="swatch c8" aria-label="A08"></button><button class="swatch c9" aria-label="B01"></button>
                <button class="swatch c10" aria-label="B02"></button><button class="swatch c11" aria-label="B03"></button><button class="swatch c12" aria-label="B04"></button>
                <button class="swatch c13" aria-label="B05"></button><button class="swatch c14" aria-label="B06"></button><button class="swatch c15" aria-label="B07"></button>
                <button class="swatch c16" aria-label="B08"></button><button class="swatch c17" aria-label="C01"></button><button class="swatch c18" aria-label="C02"></button>
              </div>
              <div class="scroll"><svg><use href="#i-chev-up"/></svg><span class="knob"></span><svg class="end"><use href="#i-chev-down"/></svg></div>
            </div>
            <div class="splitter"></div>
            <h3 class="strip">선택</h3>
            <div class="browse">
              <button class="flat" aria-label="뒤로"><svg width="16" height="16"><use href="#i-back-nav"/></svg></button>
              <button class="flat" aria-label="앞으로"><svg width="16" height="16"><use href="#i-fwd-nav"/></svg></button>
              <button class="flat" aria-label="모델"><svg width="20" height="20"><use href="#i-home"/></svg></button>
              <span class="combo tall lined"><select aria-label="모음"><option>재질</option></select><i><svg><use href="#i-drop"/></svg></i></span>
              <button class="flat" aria-label="세부"><svg width="16" height="18"><use href="#i-detail"/></svg></button>
            </div>
            <div class="list folders">
              <div class="grid">
                <button class="folder"><svg><use href="#i-folder"/></svg><span>3D 인쇄</span></button>
                <button class="folder"><svg><use href="#i-folder"/></svg><span>금속</span></button>
                <button class="folder"><svg><use href="#i-folder"/></svg><span>목재</span></button>
                <button class="folder" aria-label="벽돌"><svg><use href="#i-folder"/></svg></button>
                <button class="folder" aria-label="석재"><svg><use href="#i-folder"/></svg></button>
                <button class="folder" aria-label="유리"><svg><use href="#i-folder"/></svg></button>
              </div>
              <div class="scroll"><svg><use href="#i-chev-up"/></svg><span class="knob"></span></div>
            </div>
          </section>
        </div>
        <div class="scroll outer"><svg><use href="#i-chev-up"/></svg><span class="knob"></span><svg class="end"><use href="#i-chev-down"/></svg></div>
      </div>
    </aside>
  </div>

  <footer class="status">
    <svg viewBox="0 0 20 20"><circle cx="10" cy="10" r="8" fill="none" stroke="#999" stroke-width="2"/><path d="M10 4q4 0 4 4 0 2-4 9-4-7-4-9 0-4 4-4z" fill="#999"/></svg>
    <svg viewBox="0 0 20 20"><circle cx="10" cy="10" r="8" fill="none" stroke="#000" stroke-width="2"/><circle cx="10" cy="5" r="2"/><path d="M7 8h6v4h-1v4H8v-4H7z"/></svg>
    <svg viewBox="0 0 20 20"><circle cx="10" cy="10" r="8" fill="none" stroke="#999" stroke-width="2"/><circle cx="10" cy="8" r="4" fill="#999"/><path d="M4 16q6-7 12 0-6 4-12 0z" fill="#999"/></svg>
    <p>오프셋을 정의할 점을 선택하거나 값을 입력하십시오. Alt = 겹침 허용.</p>
    <div class="measure">
      <label for="distance">거리</label>
      <input id="distance" value="~ 21mm">
    </div>
  </footer>
</div>

</body>
</html>
```
FILE: styles.css
```css
* {
  box-sizing: border-box;
}
body {
  margin: 0;
  background-color: #000;
  color: #000;
  font-family: "Noto Sans CJK KR", "Noto Sans", sans-serif;
  font-size: 12px;
}
h1, h2, h3, p {
  margin: 0;
  font-weight: normal;
}
button {
  padding: 0;
  border: none;
  background: none;
  font: inherit;
  color: inherit;
}
svg {
  display: block;
}
.icon-set {
  position: absolute;
  width: 0;
  height: 0;
}
.glyph {
  font: 12px "Liberation Mono", monospace;
}
.tiny {
  font: 8px "Liberation Serif", serif;
}

/* window frame */
.app {
  height: 100vh;
  padding: 42px 0;
  display: flex;
  flex-direction: column;
}
.menu {
  background-color: #fff;
  display: flex;
  flex: none;
  gap: 14px;
  padding-left: 7px;
  height: 26px;
  line-height: 28px;
  font-size: 16px;
  font-weight: 350;
}
.menu a {
  color: #000;
  text-decoration: none;
}

/* top toolbar */
.toolbar {
  display: flex;
  flex: none;
  height: 47px;
  padding-top: 3px;
  background-color: #f3f3f3;
  border-bottom: 1px solid #aaa;
  overflow: hidden;
}
.group {
  display: flex;
  flex: none;
  align-items: flex-start;
  padding-left: 12px;
  border-left: 1px solid #aaa;
  background: radial-gradient(circle at 2px 2px, #aaa 1px, transparent 1px) 4px 0 / 4px 4px repeat-y;
}
.group.first {
  padding-left: 10px;
  border-left: none;
}
.tool {
  width: 42px;
  height: 42px;
  flex: none;
  display: flex;
  align-items: center;
  justify-content: center;
}
.tool svg {
  width: 36px;
  height: 36px;
}
.tool.active {
  background-color: #cce4f7;
  border: 1px solid #99c9ef;
}
.tool.split {
  width: 48px;
}
.more {
  width: 16px;
  height: 42px;
}
.more svg {
  width: 11px;
  height: 8px;
}
.sep {
  width: 1px;
  height: 39px;
  margin: 1px 5px 0 2px;
  background-color: #888;
}
.slider {
  padding-top: 14px;
  font-family: "Liberation Sans", "Noto Sans CJK KR", sans-serif;
  font-size: 10px;
  font-weight: bold;
}
.slider.date {
  width: 146px;
  margin-left: 3px;
}
.slider.time {
  width: 116px;
  margin-left: 15px;
}
.slider input {
  appearance: none;
  display: block;
  width: 100%;
  height: 10px;
  margin: 0;
  border: 1px solid #fff;
  border-top: 2px solid #888;
  border-left: 1px solid #888;
}
.slider.date input {
  background: linear-gradient(90deg, #fffce8, #f4c542 30%, #f07010 50%, #f01010 68%, #f87070 82%, #fff 98%);
}
.slider.time input {
  background: linear-gradient(90deg, #f6fafc, #a0c8e4 35%, #6890e8 70%, #4040c0);
}
.slider input::-webkit-slider-thumb {
  appearance: none;
  width: 5px;
  height: 15px;
  background-color: #f3f3f3;
  border-right: 1px solid #777;
  border-bottom: 1px solid #777;
}
.ticks {
  display: flex;
  justify-content: space-between;
  padding: 0 4px 0 2px;
  line-height: 12px;
}
.noon {
  margin-right: 28px;
}
.time .ticks {
  padding-left: 0;
}

/* work area */
.work {
  display: flex;
  flex: 1;
  min-height: 0;
  background-color: #f1f1f1;
}
.dock {
  width: 90px;
  flex: none;
  padding-right: 2px;
  border-right: 2px solid #888;
}
.palette {
  padding: 10px 0 1px 2px;
  border-right: 1px solid #bbb;
  border-bottom: 2px solid #bbb;
  background: radial-gradient(circle at 2px 2px, #bbb 1px, transparent 1px) 2px 3px / 4px 4px repeat-x #f4f4f4;
}
.cells {
  display: grid;
  grid-template-columns: 42px 42px;
}
.cells + .cells {
  margin: 2px 2px 0 0;
  padding-top: 5px;
  border-top: 1px solid #888;
}
.viewport {
  position: relative;
  flex: 1;
  min-width: 0;
  border-top: 2px solid #777;
}
.scene {
  width: 100%;
  height: 100%;
}
.caption {
  position: absolute;
  left: 5px;
  bottom: 31px;
  height: 92px;
  padding: 0 7px;
  background-color: #3f3f3e;
  color: #fff;
  font-size: 62px;
  font-weight: 300;
  line-height: 86px;
  white-space: nowrap;
}

/* default tray */
.tray {
  width: 303px;
  flex: none;
  display: flex;
  flex-direction: column;
  padding-left: 6px;
}
.tray-title {
  display: flex;
  align-items: center;
  flex: none;
  height: 27px;
  padding: 0 4px 1px;
  background: linear-gradient(#c0d0dd, #d6e4f2);
}
.tray-title h1 {
  flex: 1;
  font-size: 15px;
  font-weight: 350;
}
.pin svg {
  width: 8px;
  height: 12px;
}
.close-red {
  width: 12px;
  height: 12px;
  margin-left: 10px;
  background-color: #c75050;
}
.tray-body {
  display: flex;
  flex: 1;
  min-height: 0;
  padding-top: 1px;
}
.panels {
  flex: 1;
  min-width: 0;
  display: flex;
  flex-direction: column;
}
.panel-head {
  display: flex;
  align-items: center;
  height: 22px;
  padding: 0 2px 1px 9px;
  background: linear-gradient(#eaeaea, #bcbcbc);
  border: 1px solid #bbb;
}
.panel-head svg {
  width: 10px;
  height: 8px;
}
.panel-head h2 {
  flex: 1;
  margin-left: 7px;
  font-size: 15px;
  font-weight: 350;
}
.close {
  width: 16px;
  height: 16px;
  background-color: #e8e8e8;
  border: 1px solid #999;
}
.close svg {
  width: 14px;
  height: 12px;
}
.flat {
  display: flex;
  align-items: center;
  justify-content: center;
}
.entity {
  height: 204px;
  flex: none;
}
.entity-name {
  display: flex;
  align-items: center;
  justify-content: space-between;
  height: 32px;
  padding: 0 8px 0 11px;
  background: linear-gradient(#999, #999) 2px 100% / 246px 1px no-repeat;
}
.entity-name b {
  font-weight: 500;
}
.entity-info {
  display: flex;
  gap: 2px;
  padding: 9px 10px 0 7px;
}
.thumb {
  display: flex;
  align-items: center;
  width: 35px;
  height: 60px;
  border: 1px solid #999;
}
.thumb svg {
  width: 33px;
  height: 33px;
}
.fields {
  flex: 1;
  display: grid;
  grid-template-columns: 1fr 120px;
  grid-auto-rows: 23px;
  gap: 4px 5px;
  align-items: center;
  text-align: right;
  white-space: nowrap;
}
.combo {
  position: relative;
  display: block;
  height: 23px;
}
.combo select {
  appearance: none;
  width: 100%;
  height: 100%;
  padding: 0 0 0 2px;
  background-color: #fff;
  border: 2px solid #ddd;
  border-top-color: #777;
  border-left-color: #777;
  border-radius: 0;
  font: inherit;
  color: #000;
}
.combo i {
  position: absolute;
  top: 2px;
  right: 1px;
  bottom: 2px;
  width: 20px;
  display: flex;
  align-items: center;
  justify-content: center;
  background-color: #f3f3f3;
  border-right: 2px solid #777;
  border-bottom: 2px solid #777;
  pointer-events: none;
}
.combo i svg {
  width: 9px;
  height: 6px;
}
.combo.tall {
  flex: 1;
  height: 26px;
  margin: 0 10px 0 6px;
}
.combo.lined select {
  background: linear-gradient(#000, #000) 4px 100% / 126px 1px no-repeat #fff;
}
.sunken {
  width: 100%;
  height: 23px;
  padding: 0 2px;
  background-color: #f1f1f1;
  border: 1px solid #fff;
  border-top: 2px solid #777;
  border-left: 2px solid #777;
  font: inherit;
  color: #000;
}
.materials {
  flex: 1;
  min-height: 0;
  display: flex;
  flex-direction: column;
}
.materials > * {
  flex: none;
}
.current {
  display: flex;
  align-items: flex-start;
  height: 93px;
  padding: 3px 2px 0 2px;
  border-bottom: 1px solid #999;
}
.preview {
  width: 77px;
  height: 86px;
  padding: 5px 0;
  border: 1px solid #999;
}
.preview svg {
  width: 75px;
  height: 75px;
}
.mat-name {
  width: 161px;
  margin-left: 3px;
  color: #777;
}
.side {
  flex: 1;
  display: flex;
  flex-direction: column;
  align-items: center;
  gap: 8px;
  padding: 4px 0 0 4px;
}
.mini {
  width: 26px;
  height: 26px;
}
.tabs {
  display: flex;
  align-items: flex-end;
  height: 31px;
}
.tab {
  height: 20px;
  padding: 0 20px 0 5px;
  border-top: 1px solid #fff;
  border-right: 2px solid #777;
}
.tab.on {
  height: 22px;
  padding-left: 7px;
  padding-bottom: 2px;
}
.dropper {
  margin: 0 4px 4px auto;
}
.browse {
  display: flex;
  align-items: center;
  height: 36px;
  padding: 0 6px 2px 8px;
  border-bottom: 1px solid #999;
}
.browse .flat + .flat {
  margin-left: 11px;
}
.list {
  display: flex;
  justify-content: space-between;
  overflow: hidden;
  background-color: #fff;
}
.list .scroll {
  margin-right: 1px;
}
.colors {
  height: 334px;
}
.materials .folders {
  flex: 1;
  min-height: 0;
}
.grid {
  display: grid;
  grid-template-columns: repeat(3, 62px);
  grid-auto-rows: 62px;
  gap: 2px;
  padding: 2px 3px;
}
.swatch {
  border: 1px solid #999;
  padding: 1px;
  background-clip: content-box;
}
.c1 { background-color: #ffcccc; }
.c2 { background-color: #ff9999; }
.c3 { background-color: #ff6666; }
.c4 { background-color: #ff3333; }
.c5 { background-color: #ff0000; }
.c6 { background-color: #cc0000; }
.c7 { background-color: #990000; }
.c8 { background-color: #660000; }
.c9 { background-color: #ffd9cc; }
.c10 { background-color: #ffb399; }
.c11 { background-color: #ff8f66; }
.c12 { background-color: #ff6a33; }
.c13 { background-color: #ff4400; }
.c14 { background-color: #cc3600; }
.c15 { background-color: #992900; }
.c16 { background-color: #661b00; }
.c17 { background-color: #ffe6cc; }
.c18 { background-color: #ffcc99; }
.scroll {
  display: flex;
  flex-direction: column;
  align-items: center;
  width: 19px;
  padding-top: 7px;
  background-color: #f1f1f1;
}
.scroll svg {
  width: 12px;
  height: 8px;
  flex: none;
}
.scroll .knob {
  width: 19px;
  height: 21px;
  flex: none;
  margin-top: 6px;
  background-color: #cdcdcd;
}
.scroll .end {
  margin: auto 0 6px;
}
.scroll.outer {
  flex: none;
  width: 21px;
  border-left: 2px solid #fff;
}
.splitter {
  height: 9px;
  background: linear-gradient(#777, #777) 0 3px / 100% 2px no-repeat;
}
.strip {
  height: 23px;
  padding-left: 4px;
  border-top: 1px solid #999;
  border-bottom: 1px solid #999;
  background-color: #e4e5e5;
  line-height: 20px;
  font-size: 12px;
}
.folder {
  display: flex;
  flex-direction: column;
  align-items: center;
  padding-top: 12px;
  border: 1px solid #999;
}
.folder svg {
  width: 38px;
  height: 32px;
  flex: none;
}
.folder span {
  align-self: flex-start;
  margin-top: -4px;
  padding: 0 1px 0 3px;
  background-color: #fff;
  line-height: 16px;
}

/* status bar */
.status {
  display: flex;
  flex: none;
  align-items: center;
  gap: 15px;
  height: 27px;
  padding: 6px 6px 0 5px;
  background-color: #f1f1f1;
  border-top: 2px solid #fff;
  font-size: 17px;
  font-weight: 350;
  overflow: hidden;
}
.status svg {
  width: 20px;
  height: 20px;
  flex: none;
}
.status p {
  flex: 1;
  margin-left: -3px;
  padding-left: 10px;
  border-left: 1px solid #888;
  line-height: 18px;
  white-space: nowrap;
}
.measure {
  display: flex;
  align-items: center;
  gap: 8px;
  width: 301px;
  padding-left: 11px;
  border-left: 1px solid #888;
  line-height: 18px;
}
.measure label {
  white-space: nowrap;
}
.measure input {
  flex: 1;
  min-width: 0;
  height: 24px;
  padding: 0 3px;
  border: 1px solid #abc;
  font-family: "Noto Sans", sans-serif;
  font-size: 16px;
}
```
